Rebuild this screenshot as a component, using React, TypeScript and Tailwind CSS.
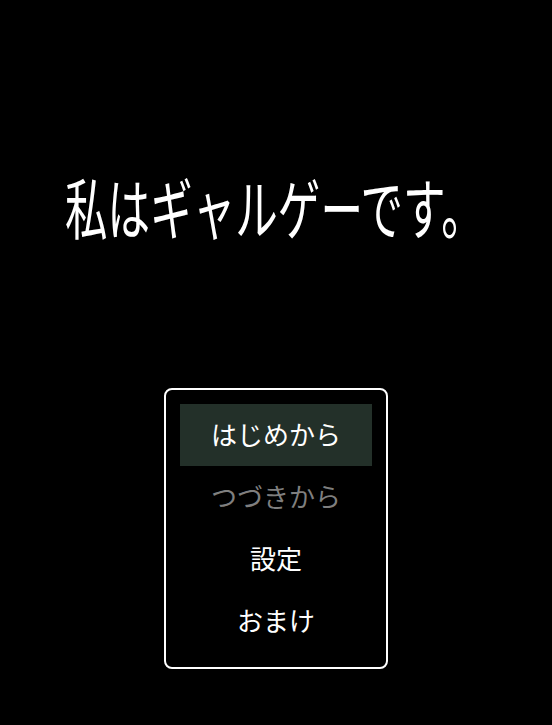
const MENU: { label: string; active?: boolean; disabled?: boolean }[] = [
  { label: "はじめから", active: true },
  { label: "つづきから", disabled: true },
  { label: "設定" },
  { label: "おまけ" },
];

export default function App() {
  return (
    <div
      className="flex h-[725px] w-full flex-col bg-black text-white"
      style={{ fontFamily: '"Noto Sans CJK JP", "Noto Sans", sans-serif' }}
    >
      {/* タイトル */}
      <div className="h-[165px] shrink-0" />
      <div className="h-[80px] pl-[65px]">
        <h1 className="origin-left scale-x-[0.645] whitespace-nowrap text-[66px] font-normal leading-[80px] text-white">
          私はギャルゲーです。
        </h1>
      </div>

      {/* メニュー */}
      <div className="mt-[143px] flex justify-center">
        <div className="w-[224px] rounded-[8px] border-2 border-white px-[14px] pb-[15px] pt-[14px]">
          {MENU.map((item) => (
            <div
              key={item.label}
              className={
                "flex h-[62px] items-center justify-center pb-[3px] text-[26px] " +
                (item.active ? "bg-[#233029] text-white" : "") +
                (item.disabled ? "text-[#7f7f7f]" : "")
              }
            >
              {item.label}
            </div>
          ))}
        </div>
      </div>
    </div>
  );
}
